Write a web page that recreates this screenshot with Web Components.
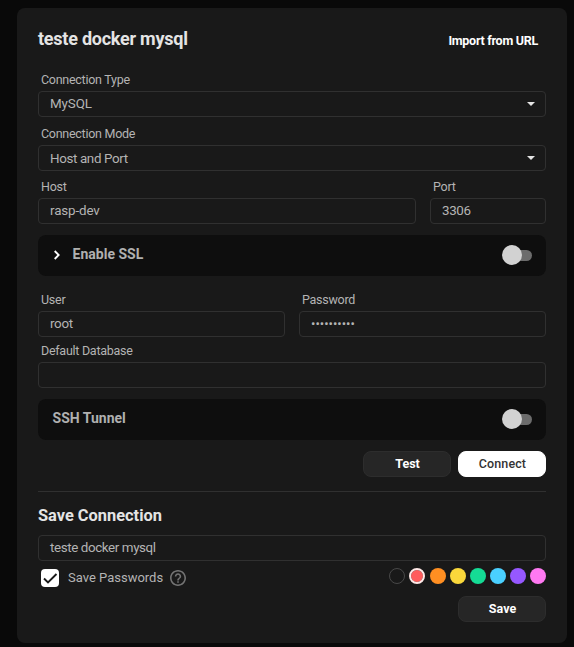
<!DOCTYPE html>
<html lang="en"><head><meta charset="utf-8"><title>Connection</title>
<style>
html,body{margin:0;height:100%;background:#090909}
body{font-family:Roboto,"Liberation Sans",sans-serif;color:#b4b4b4;font-size:13px}
</style></head><body>
<connection-form></connection-form>
<script>
const define=(name,html)=>customElements.define(name,class extends HTMLElement{
  constructor(){super();this.attachShadow({mode:'open'}).innerHTML=html;}
});
define('form-field',`<style>
:host{display:block;min-width:0}
.label{display:block;height:16px;line-height:16px;margin:0 0 3px 3px;font-size:12.5px;white-space:nowrap;letter-spacing:-.27px}
.box{box-sizing:border-box;height:26px;border:1px solid #303030;border-radius:4px;padding:0 10px 0 11px;display:flex;align-items:center;justify-content:space-between;line-height:24px;white-space:pre;font-size:13.4px;letter-spacing:var(--track,-.2px)}
:host([plain]) .label,.caret{display:none}
:host([select]) .caret{display:block}
</style><span class="label"><slot name="label"></slot></span>
<div class="box"><slot></slot><svg class="caret" width="8" height="4" viewBox="0 0 8 4"><path d="M0 0h8L4 4z" fill="#e4e4e4"/></svg></div>`);
define('toggle-switch',`<style>
:host{display:grid;width:30px;height:20px;margin-bottom:1px}
.track,.knob{grid-area:1/1;align-self:center}
.knob{width:20px;height:20px;border-radius:50%;background:#d2d2d2}
.track{height:11px;margin-left:6px;border-radius:6px;background:#6c6c6c}
</style><div class="track"></div><div class="knob"></div>`);
define('toggle-panel',`<style>
:host{display:flex;align-items:center;box-sizing:border-box;height:41px;border-radius:8px;background:#0e0e0e;padding:0 14px;font-size:14px;font-weight:700;line-height:20px;color:#b0b0b0}
.title{flex:1;padding:0 0 3px .6px}
.chev{display:none;margin:0 11px 1px 1px}
:host([expandable]) .chev{display:block}
</style><svg class="chev" width="8" height="12" viewBox="0 0 8 12"><path d="M1.7 2l4 4-4 4" fill="none" stroke="#fff" stroke-width="1.8"/></svg>
<div class="title"><slot></slot></div><toggle-switch></toggle-switch>`);
define('push-button',`<style>
:host{display:block;box-sizing:border-box;width:88px;height:26px;line-height:24px;border:1px solid #2d2d2d;border-radius:8px;background:#262626;color:#fff;text-align:center;font-size:12.5px;font-weight:700;padding-left:1px}
:host([primary]){background:#fff;border-color:#fff;color:#333;font-weight:500;letter-spacing:.1px}
</style><slot></slot>`);
define('color-swatch',`<style>
:host{display:block;box-sizing:border-box;width:16px;height:16px;border-radius:50%;background:var(--c)}
:host([empty]){border:1px solid #484848}
:host([selected]){border:2px solid #ffe9e7;margin-right:1px;background-clip:padding-box}
</style>`);
define('check-box',`<style>
:host{display:flex;align-items:center;height:18px;line-height:18px}
.mark{display:block;margin-right:9px}
</style><svg class="mark" width="18" height="18" viewBox="0 0 18 18"><rect width="18" height="18" rx="4" fill="#fff"/><path d="M3 9.5l4 4L15.5 5" fill="none" stroke="#191919" stroke-width="1.9"/></svg><slot></slot>`);
define('help-icon',`<style>:host{display:block;width:16px;height:16px}svg{display:block}</style>
<svg width="16" height="16" viewBox="2 2 20 20"><path fill="#737373" d="M11 18h2v-2h-2v2zm1-16C6.48 2 2 6.48 2 12s4.48 10 10 10 10-4.48 10-10S17.52 2 12 2zm0 18c-4.41 0-8-3.59-8-8s3.59-8 8-8 8 3.59 8 8-3.59 8-8 8zm0-14c-2.21 0-4 1.79-4 4h2c0-1.1.9-2 2-2s2 .9 2 2c0 2-3 1.75-3 5h2c0-2.25 3-2.5 3-5 0-2.21-1.79-4-4-4z"/></svg>`);
define('connection-form',`<style>
:host{display:block;padding:8px 7px 0 17px}
.card{box-sizing:border-box;height:635px;background:#191919;border-radius:8px;padding:0 21px;display:flex;flex-direction:column}
.head{height:64px;display:flex;justify-content:space-between;box-sizing:border-box;padding-top:20px;line-height:22px}
h1,h2{margin:0;color:#e4e4e4;font-weight:700}
h1{font-size:18px;letter-spacing:-.24px}
.import{color:#fff;font-weight:700;font-size:12.5px;letter-spacing:-.27px;padding:2px 8px 0 0}
.row{display:grid;gap:14px}
.host{grid-template-columns:378px 1fr;margin-top:8px}
.user{grid-template-columns:1fr 1fr;margin-top:16px}
.actions{display:flex;justify-content:flex-end;gap:7px;margin-top:11px}
hr{border:0;height:1px;width:100%;background:#303030;margin:14px 0 14px}
h2{font-size:16.4px;line-height:20px}
.save{display:flex;justify-content:space-between;margin:7px 0 9px;height:19px}
.left{display:flex;align-items:center;gap:7px;padding:0 0 0 3px}
.colors{display:flex;gap:4px}
.dots{font-size:13px;letter-spacing:0}
.mode{padding-top:1px}
</style>
<div class="card">
<div class="head"><h1>teste docker mysql</h1><span class="import">Import from URL</span></div>
<form-field select style="--track:-.1px"><span slot="label">Connection Type</span><span>MySQL</span></form-field>
<form-field select style="margin-top:9px;--track:-.37px"><span slot="label">Connection Mode</span><span class="mode">Host and Port</span></form-field>
<div class="row host"><form-field style="--track:-.13px"><span slot="label">Host</span><span>rasp-dev</span></form-field><form-field style="--track:-.4px"><span slot="label">Port</span><span>3306</span></form-field></div>
<toggle-panel expandable style="margin-top:11px">Enable SSL</toggle-panel>
<div class="row user"><form-field style="--track:-.3px"><span slot="label">User</span><span>root</span></form-field><form-field><span slot="label">Password</span><span class="dots">••••••••••</span></form-field></div>
<form-field style="margin-top:6px"><span slot="label">Default Database</span></form-field>
<toggle-panel style="margin-top:11px">SSH Tunnel</toggle-panel>
<div class="actions"><push-button>Test</push-button><push-button primary>Connect</push-button></div>
<hr><h2>Save Connection</h2>
<form-field plain style="margin-top:9px;--track:-.4px"><span>teste docker mysql</span></form-field>
<div class="save"><div class="left"><check-box>Save Passwords</check-box><help-icon></help-icon></div>
<div class="colors"><color-swatch empty></color-swatch><color-swatch selected style="--c:#ff5c5c"></color-swatch><color-swatch style="--c:#ff8f22"></color-swatch><color-swatch style="--c:#fad83b"></color-swatch><color-swatch style="--c:#15db95"></color-swatch><color-swatch style="--c:#4ad0ff"></color-swatch><color-swatch style="--c:#9658ff"></color-swatch><color-swatch style="--c:#ff79f2"></color-swatch></div></div>
<div class="actions" style="margin:0"><push-button>Save</push-button></div>
</div>`);
</script></body></html>
